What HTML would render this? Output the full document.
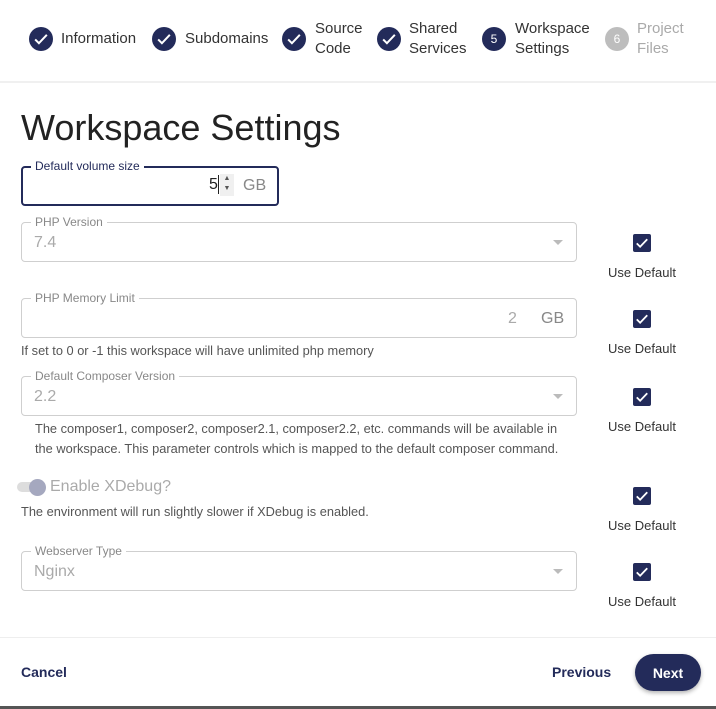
<!DOCTYPE html>
<html><head><meta charset="utf-8"><style>
*{box-sizing:border-box;margin:0;padding:0}
body{width:716px;height:709px;background:#fff;font-family:"Liberation Sans",sans-serif;position:relative;overflow:hidden;color:#222}
.a{position:absolute}
.c{width:24px;height:24px;border-radius:50%;background:#232b5a;color:#fff;font-size:12px;display:flex;align-items:center;justify-content:center}
.st{font-size:15px;color:#333;line-height:20px}
.f{border:1px solid #cfcfcf;border-radius:4px}
.lb{font-size:12px;color:#888;background:#fff;padding:0 4px;line-height:12px}
.val{font-size:16px;color:#aaa}
.cb{width:18px;height:18px;background:#232b5a;border-radius:2px;display:flex;align-items:center;justify-content:center}
.ud{font-size:13px;color:#333;width:80px;text-align:center}
.hp{font-size:12.8px;color:#555;line-height:20px}
.arr{width:0;height:0;border-left:5px solid transparent;border-right:5px solid transparent;border-top:5px solid #bbb}
</style></head><body>
<svg width="0" height="0" style="position:absolute"><defs><symbol id="ck" viewBox="0 0 24 24"><path d="M5 12.5l4.5 4.5 9.5-10" fill="none" stroke="#fff" stroke-width="2.4"/></symbol></defs></svg>

<div class="a c" style="left:29px;top:27px"><svg width="20" height="20"><use href="#ck"/></svg></div>
<div class="a st" style="left:61px;top:29px">Information</div>
<div class="a c" style="left:152px;top:27px"><svg width="20" height="20"><use href="#ck"/></svg></div>
<div class="a st" style="left:185px;top:29px">Subdomains</div>
<div class="a c" style="left:282px;top:27px"><svg width="20" height="20"><use href="#ck"/></svg></div>
<div class="a st" style="left:315px;top:19px">Source<br>Code</div>
<div class="a c" style="left:377px;top:27px"><svg width="20" height="20"><use href="#ck"/></svg></div>
<div class="a st" style="left:409px;top:19px">Shared<br>Services</div>
<div class="a c" style="left:482px;top:27px">5</div>
<div class="a st" style="left:515px;top:19px">Workspace<br>Settings</div>
<div class="a c" style="left:605px;top:27px;background:#bdbdbd">6</div>
<div class="a st" style="left:637px;top:19px;color:#aaa">Project<br>Files</div>
<div class="a" style="left:0;top:81px;width:716px;height:2px;background:#f0f0f0"></div>

<div class="a" style="left:21px;top:107px;font-size:36px;color:#222">Workspace Settings</div>

<div class="a" style="left:21px;top:166px;width:258px;height:40px;border:2px solid #232b5a;border-radius:4px"></div>
<div class="a lb" style="left:31px;top:160px;color:#232b5a">Default volume size</div>
<div class="a" style="left:209px;top:176px;font-size:16px;color:#222">5</div>
<div class="a" style="left:218px;top:175px;width:1px;height:19px;background:#222"></div>
<div class="a" style="left:220px;top:174px;width:14px;height:22px;background:#f0f0f0;font-size:7px;color:#555;text-align:center;line-height:10px">▲<br>▼</div>
<div class="a val" style="left:243px;top:177px;color:#888">GB</div>

<div class="a f" style="left:21px;top:222px;width:556px;height:40px"></div>
<div class="a lb" style="left:31px;top:216px">PHP Version</div>
<div class="a val" style="left:34px;top:234px">7.4</div>
<div class="a arr" style="left:553px;top:240px"></div>
<div class="a cb" style="left:633px;top:234px"><svg width="18" height="18"><use href="#ck"/></svg></div>
<div class="a ud" style="left:602px;top:265px">Use Default</div>

<div class="a f" style="left:21px;top:298px;width:556px;height:40px"></div>
<div class="a lb" style="left:31px;top:292px">PHP Memory Limit</div>
<div class="a val" style="left:508px;top:310px">2</div>
<div class="a val" style="left:541px;top:310px;color:#888">GB</div>
<div class="a hp" style="left:21px;top:341px">If set to 0 or -1 this workspace will have unlimited php memory</div>
<div class="a cb" style="left:633px;top:310px"><svg width="18" height="18"><use href="#ck"/></svg></div>
<div class="a ud" style="left:602px;top:341px">Use Default</div>

<div class="a f" style="left:21px;top:376px;width:556px;height:40px"></div>
<div class="a lb" style="left:31px;top:370px">Default Composer Version</div>
<div class="a val" style="left:34px;top:388px">2.2</div>
<div class="a arr" style="left:553px;top:394px"></div>
<div class="a hp" style="left:35px;top:419px">The composer1, composer2, composer2.1, composer2.2, etc. commands will be available in<br>the workspace. This parameter controls which is mapped to the default composer command.</div>
<div class="a cb" style="left:633px;top:388px"><svg width="18" height="18"><use href="#ck"/></svg></div>
<div class="a ud" style="left:602px;top:419px">Use Default</div>

<div class="a" style="left:17px;top:482px;width:26px;height:10px;border-radius:5px;background:#ddd"></div>
<div class="a" style="left:29px;top:479px;width:17px;height:17px;border-radius:50%;background:#a5a8bf"></div>
<div class="a" style="left:50px;top:478px;font-size:16px;color:#aaa">Enable XDebug?</div>
<div class="a hp" style="left:21px;top:502px">The environment will run slightly slower if XDebug is enabled.</div>
<div class="a cb" style="left:633px;top:487px"><svg width="18" height="18"><use href="#ck"/></svg></div>
<div class="a ud" style="left:602px;top:518px">Use Default</div>

<div class="a f" style="left:21px;top:551px;width:556px;height:40px"></div>
<div class="a lb" style="left:31px;top:545px">Webserver Type</div>
<div class="a val" style="left:34px;top:563px">Nginx</div>
<div class="a arr" style="left:553px;top:569px"></div>
<div class="a cb" style="left:633px;top:563px"><svg width="18" height="18"><use href="#ck"/></svg></div>
<div class="a ud" style="left:602px;top:594px">Use Default</div>

<div class="a" style="left:0;top:637px;width:716px;height:1px;background:#eee"></div>
<div class="a" style="left:21px;top:664px;font-size:14px;font-weight:bold;color:#232b5a">Cancel</div>
<div class="a" style="left:552px;top:664px;font-size:14px;font-weight:bold;color:#232b5a">Previous</div>
<div class="a" style="left:635px;top:654px;width:66px;height:37px;border-radius:19px;background:#232b5a;color:#fff;font-size:14px;font-weight:bold;display:flex;align-items:center;justify-content:center;box-shadow:0 2px 4px rgba(0,0,0,.3)">Next</div>
<div class="a" style="left:0;top:706px;width:716px;height:3px;background:#555"></div>
</body></html>
